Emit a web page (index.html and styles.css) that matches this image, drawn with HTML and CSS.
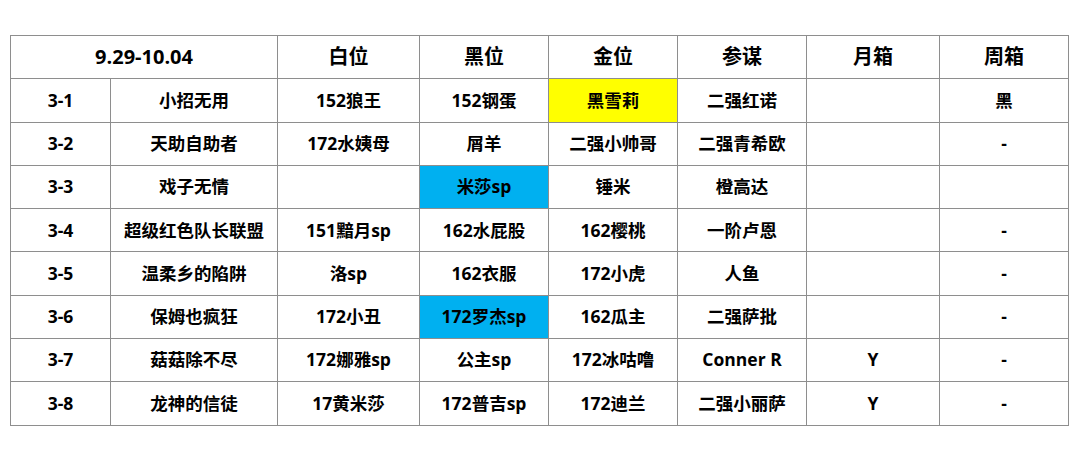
FILE: index.html
```html
<!DOCTYPE html>
<html lang="zh">
<head>
<meta charset="utf-8">
<link rel="stylesheet" href="styles.css">
</head>
<body>
<table class="grid">
  <colgroup>
    <col class="c1"><col class="c2"><col class="c3"><col class="c4"><col class="c5"><col class="c6"><col class="c7"><col class="c8">
  </colgroup>
  <thead>
    <tr class="head">
      <th colspan="2">9.29-10.04</th><th>白位</th><th>黑位</th><th>金位</th><th>参谋</th><th>月箱</th><th>周箱</th>
    </tr>
  </thead>
  <tbody>
    <tr><td>3-1</td><td>小招无用</td><td>152狼王</td><td>152钢蛋</td><td class="yellow">黑雪莉</td><td>二强红诺</td><td></td><td>黑</td></tr>
    <tr><td>3-2</td><td>天助自助者</td><td>172水姨母</td><td>屑羊</td><td>二强小帅哥</td><td>二强青希欧</td><td></td><td>-</td></tr>
    <tr><td>3-3</td><td>戏子无情</td><td></td><td class="blue">米莎sp</td><td>锤米</td><td>橙高达</td><td></td><td></td></tr>
    <tr><td>3-4</td><td>超级红色队长联盟</td><td>151黯月sp</td><td>162水屁股</td><td>162樱桃</td><td>一阶卢恩</td><td></td><td>-</td></tr>
    <tr><td>3-5</td><td>温柔乡的陷阱</td><td>洛sp</td><td>162衣服</td><td>172小虎</td><td>人鱼</td><td></td><td>-</td></tr>
    <tr><td>3-6</td><td>保姆也疯狂</td><td>172小丑</td><td class="blue">172罗杰sp</td><td>162瓜主</td><td>二强萨批</td><td></td><td>-</td></tr>
    <tr><td>3-7</td><td>菇菇除不尽</td><td>172娜雅sp</td><td>公主sp</td><td>172冰咕噜</td><td>Conner R</td><td>Y</td><td>-</td></tr>
    <tr><td>3-8</td><td>龙神的信徒</td><td>17黄米莎</td><td>172普吉sp</td><td>172迪兰</td><td>二强小丽萨</td><td>Y</td><td>-</td></tr>
  </tbody>
</table>
</body>
</html>
```

FILE: styles.css
```css
html, body {
  margin: 0;
  padding: 0;
  background: #ffffff;
}
body {
  padding: 35px 0 0 10px;
  font-family: "Open Sans", "Noto Sans CJK SC", sans-serif;
  color: #000000;
}
.grid {
  border-collapse: collapse;
  table-layout: fixed;
  width: 1058px;
}
.c1 { width: 100px; }
.c2 { width: 167px; }
.c3 { width: 142px; }
.c4 { width: 129px; }
.c5 { width: 129px; }
.c6 { width: 129px; }
.c7 { width: 133px; }
.c8 { width: 129px; }
.grid th, .grid td {
  border: 1px solid #8e8e8e;
  text-align: center;
  vertical-align: middle;
  padding: 0;
  font-weight: 700;
  white-space: nowrap;
  line-height: 1;
}
.grid th {
  height: 42.3px;
  font-size: 20px;
}
.grid td {
  height: 42.3px;
  font-size: 17.5px;
}
.yellow { background: #ffff00; }
.blue { background: #00b0f0; }
```
